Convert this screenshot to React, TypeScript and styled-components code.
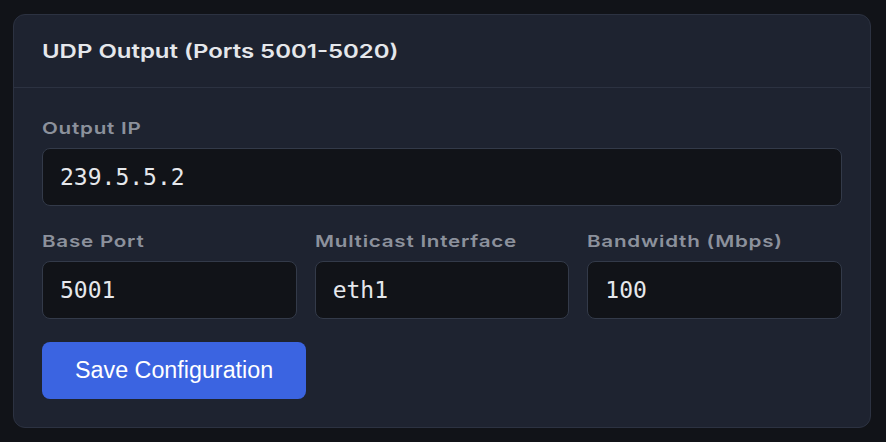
import React from "react";
import styled, { createGlobalStyle } from "styled-components";

const Colors = {
  PAGE: "#111318",
  CARD: "#1e2330",
  BORDER: "#2c3241",
  INPUT_BORDER: "#333a49",
  TITLE: "#e5e7eb",
  LABEL: "#8c919c",
  VALUE: "#e6e8ec",
  BLUE: "#3b64e1",
};

const GlobalStyle = createGlobalStyle`
  html, body {
    margin: 0;
    background: ${Colors.PAGE};
    overflow: hidden;
  }
  body {
    font-family: Inter, "Noto Sans", sans-serif;
  }
`;

interface FieldProps {
  label: string;
  value: string;
}

function Field({ label, value }: FieldProps) {
  return (
    <FieldBox>
      <Label>{label}</Label>
      <Input defaultValue={value} spellCheck={false} />
    </FieldBox>
  );
}

export default function App() {
  return (
    <Page>
      <GlobalStyle />
      <Card>
        <Header>
          <Title>UDP Output (Ports 5001-5020)</Title>
        </Header>
        <Body>
          <Field label="Output IP" value="239.5.5.2" />
          <Row>
            <Field label="Base Port" value="5001" />
            <Field label="Multicast Interface" value="eth1" />
            <Field label="Bandwidth (Mbps)" value="100" />
          </Row>
          <Actions>
            <SaveButton type="button">Save Configuration</SaveButton>
          </Actions>
        </Body>
      </Card>
    </Page>
  );
}

let Page = styled.div`
  padding: 14px 15px 15px 13px;
`;

let Card = styled.section`
  background: ${Colors.CARD};
  border: 1px solid ${Colors.BORDER};
  border-radius: 12px;
  display: flex;
  flex-direction: column;
  overflow: hidden;
`;

let Header = styled.header`
  height: 72px;
  padding: 0 28px;
  display: flex;
  align-items: center;
  border-bottom: 1px solid ${Colors.BORDER};
`;

// the heading face is wide; Inter gets stretched to the same run length
let Title = styled.h2`
  margin: 0;
  font-size: 19px;
  font-weight: 600;
  color: ${Colors.TITLE};
  white-space: nowrap;
  transform: scaleX(1.26);
  transform-origin: left center;
`;

let Body = styled.div`
  padding: 28px;
  display: flex;
  flex-direction: column;
  gap: 23px;
`;

let Row = styled.div`
  display: grid;
  grid-template-columns: repeat(3, minmax(0, 1fr));
  gap: 18px;
`;

let FieldBox = styled.label`
  display: flex;
  flex-direction: column;
  gap: 8px;
  min-width: 0;
`;

let Label = styled.span`
  display: block;
  font-size: 16.5px;
  line-height: 24px;
  font-weight: 600;
  letter-spacing: 0.6px;
  color: ${Colors.LABEL};
  white-space: nowrap;
  transform: scaleX(1.25);
  transform-origin: left center;
`;

let Input = styled.input`
  box-sizing: border-box;
  width: 100%;
  min-width: 0;
  height: 58px;
  padding: 0 17px;
  background: ${Colors.PAGE};
  border: 1px solid ${Colors.INPUT_BORDER};
  border-radius: 8px;
  color: ${Colors.VALUE};
  font-family: "DejaVu Sans Mono", "Liberation Mono", monospace;
  font-size: 23px;
  outline: none;
`;

let Actions = styled.div`
  display: flex;
`;

let SaveButton = styled.button`
  height: 57px;
  padding: 0 33px;
  border: none;
  border-radius: 8px;
  background: ${Colors.BLUE};
  color: #ffffff;
  font-family: "Liberation Sans", Arial, sans-serif;
  font-size: 23.3px;
  cursor: pointer;
`;
